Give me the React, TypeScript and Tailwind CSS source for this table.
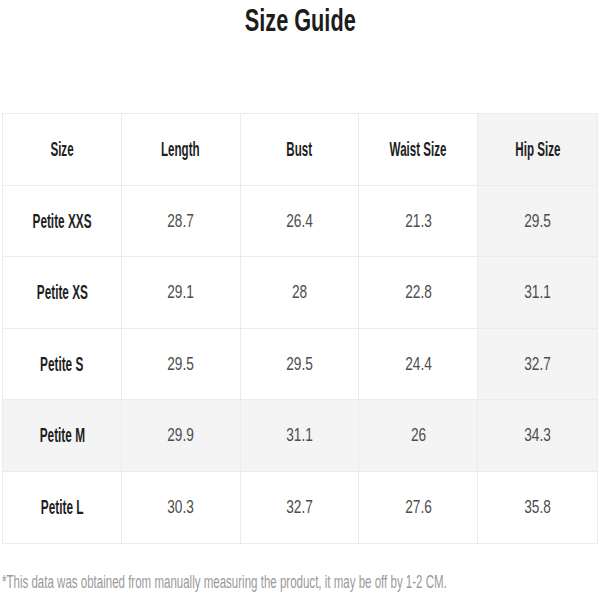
import React from "react";

const headers = ["Size", "Length", "Bust", "Waist Size", "Hip Size"];
const rows = [
  ["Petite XXS", "28.7", "26.4", "21.3", "29.5"],
  ["Petite XS", "29.1", "28", "22.8", "31.1"],
  ["Petite S", "29.5", "29.5", "24.4", "32.7"],
  ["Petite M", "29.9", "31.1", "26", "34.3"],
  ["Petite L", "30.3", "32.7", "27.6", "35.8"],
];

const font = { fontFamily: '"Liberation Sans", Arial, sans-serif' };

export default function App() {
  return (
    <div className="w-[600px] h-[600px] bg-white flex flex-col overflow-hidden" style={font}>
      <div className="h-[113px] pt-[2px] flex justify-center">
        <h1 className="inline-block h-[38px] text-[31px] leading-[38px] font-bold text-[#1c1c1c] scale-x-[0.7] whitespace-nowrap">
          Size Guide
        </h1>
      </div>
      <div className="mx-[2px] w-[596px] h-[431px] grid grid-cols-5 grid-rows-6 border border-[#ebebeb]">
        {headers.map((h, i) => (
          <div
            key={h}
            className={`flex items-center justify-center border-[#ebebeb] ${i < 4 ? "border-r" : ""} border-b ${i === 4 ? "bg-[#f4f4f4]" : "bg-white"}`}
          >
            <span className="inline-block whitespace-nowrap text-[20px] leading-[24px] font-bold text-[#1e1e1e] scale-x-[0.58]">
              {h}
            </span>
          </div>
        ))}
        {rows.map((r, ri) =>
          r.map((c, ci) => {
            const gray = ri === 3 || (ci === 4 && ri < 4);
            return (
              <div
                key={`${ri}-${ci}`}
                className={`flex items-center justify-center border-[#ebebeb] ${ci < 4 ? "border-r" : ""} ${ri < 4 ? "border-b" : ""} ${gray ? "bg-[#f4f4f4]" : "bg-white"}`}
              >
                {ci === 0 ? (
                  <span className="inline-block whitespace-nowrap text-[20px] leading-[24px] font-bold text-[#1e1e1e] scale-x-[0.59]">
                    {c}
                  </span>
                ) : (
                  <span className="inline-block whitespace-nowrap text-[19px] leading-[24px] text-[#4d4d4d] scale-x-[0.72]">
                    {c}
                  </span>
                )}
              </div>
            );
          })
        )}
      </div>
      <div className="mt-[27px] pl-[2px] w-[600px] overflow-hidden">
        <p className="inline-block origin-left whitespace-nowrap text-[18px] leading-[22px] text-[#9a9a9a] scale-x-[0.64]">
          *This data was obtained from manually measuring the product, it may be off by 1-2 CM.
        </p>
      </div>
    </div>
  );
}
